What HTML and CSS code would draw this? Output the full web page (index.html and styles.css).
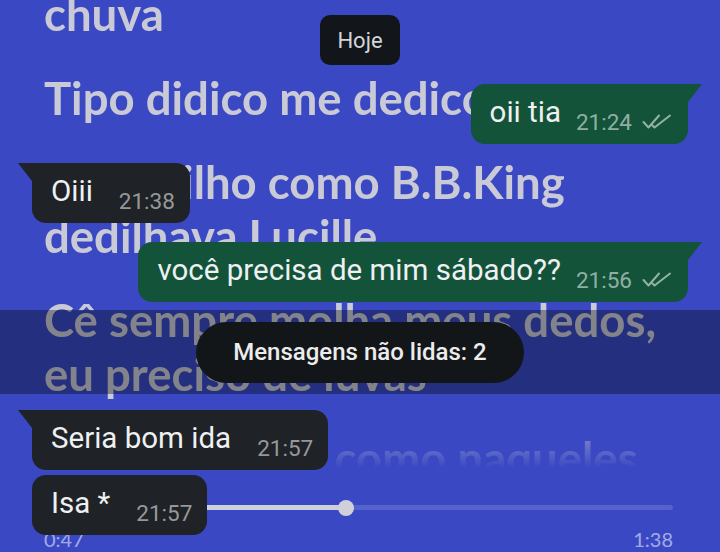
FILE: index.html
```html
<!DOCTYPE html>
<html lang="pt-BR">
<head>
    <meta charset="UTF-8">
    <meta name="viewport" content="width=device-width, initial-scale=1.0">
    <title>Conversa</title>
    <link rel="stylesheet" href="styles.css">
</head>
<body>

    <!-- Lyrics wallpaper -->
    <div class="lyrics-screen">
        <div class="lyrics">
            <p class="lyric">chuva</p>
            <p class="lyric">Tipo didico me dedico</p>
            <p class="lyric">Eu dedilho como B.B.King<br>dedilhava Lucille</p>
            <p class="lyric">Cê sempre molha meus dedos,<br>eu preciso de luvas</p>
            <p class="lyric">Te aquecendo como naqueles</p>
        </div>
        <div class="progress">
            <div class="progress-fill" style="width: 48%"></div>
        </div>
        <div class="times">
            <span>0:47</span>
            <span>1:38</span>
        </div>
    </div>

    <!-- Chat -->
    <div class="chat">
        <div class="date-pill">Hoje</div>

        <div class="msg out tail">
            <span class="msg-text">oii tia</span>
            <span class="msg-meta">
                <span class="msg-time">21:24</span>
                <svg class="ticks" viewBox="0 0 30 16"><path d="M1.5 8 L6.5 13.5 L17 1.5"/><path d="M10.5 11.5 L12.5 13.5 L28 1.5"/></svg>
            </span>
        </div>

        <div class="msg in tail">
            <span class="msg-text">Oiii</span>
            <span class="msg-meta"><span class="msg-time">21:38</span></span>
        </div>

        <div class="msg out tail">
            <span class="msg-text">você precisa de mim sábado??</span>
            <span class="msg-meta">
                <span class="msg-time">21:56</span>
                <svg class="ticks" viewBox="0 0 30 16"><path d="M1.5 8 L6.5 13.5 L17 1.5"/><path d="M10.5 11.5 L12.5 13.5 L28 1.5"/></svg>
            </span>
        </div>

        <div class="unread">
            <div class="unread-pill">Mensagens não lidas: 2</div>
        </div>

        <div class="msg in tail">
            <span class="msg-text">Seria bom ida</span>
            <span class="msg-meta"><span class="msg-time">21:57</span></span>
        </div>

        <div class="msg in cont">
            <span class="msg-text">Isa *</span>
            <span class="msg-meta"><span class="msg-time">21:57</span></span>
        </div>
    </div>

</body>
</html>
```

FILE: styles.css
```css
* {
    box-sizing: border-box;
}
body {
    margin: 0;
    width: 720px;
    height: 552px;
    overflow: hidden;
    position: relative;
    background: #3a49c3;
}

/* lyrics behind the chat */
.lyrics-screen {
    display: flex;
    flex-direction: column;
    height: 552px;
    padding: 0 47px 0 44px;
    font-family: Lato, "DejaVu Sans", sans-serif;
}
.lyrics {
    height: 481px;
    margin-top: -13px;
    overflow: hidden;
    display: flex;
    flex-direction: column;
    gap: 30px;
    -webkit-mask-image: linear-gradient(to bottom, #000 calc(100% - 70px), transparent);
    mask-image: linear-gradient(to bottom, #000 calc(100% - 70px), transparent);
}
.lyric {
    margin: 0;
    font-size: 45.5px;
    line-height: 54px;
    font-weight: 700;
    white-space: nowrap;
    color: #c9cad6;
}
.progress {
    margin-top: 37px;
    height: 5px;
    border-radius: 3px;
    background: rgba(255, 255, 255, 0.14);
}
.progress-fill {
    position: relative;
    height: 100%;
    border-radius: 3px;
    background: #cfd0d9;
}
.progress-fill::after {
    content: "";
    position: absolute;
    right: -8px;
    top: 50%;
    width: 16px;
    height: 16px;
    margin-top: -8px;
    border-radius: 50%;
    background: #cfd0d9;
}
.times {
    display: flex;
    justify-content: space-between;
    margin-top: 17px;
    font-size: 20px;
    line-height: 24px;
    color: rgba(255, 255, 255, 0.55);
}

/* chat on top */
.chat {
    position: absolute;
    inset: 0;
    display: flex;
    flex-direction: column;
    font-family: Roboto, "Liberation Sans", sans-serif;
}
.date-pill {
    align-self: center;
    margin-top: 15px;
    height: 50px;
    padding: 0 17px;
    display: flex;
    align-items: center;
    border-radius: 10px;
    background: #121519;
    color: #d3d5d7;
    font-size: 22px;
}
.msg {
    position: relative;
    display: flex;
    align-items: flex-end;
    margin-top: 19px;
    padding: 12px 16px 10px 19px;
    border-radius: 14px;
    color: #eef0f1;
}
.msg.out {
    align-self: flex-end;
    margin-right: 32px;
    background: #13533a;
}
.msg.in {
    align-self: flex-start;
    margin-left: 32px;
    padding-right: 15px;
    background: #1f2226;
}
.msg.cont {
    margin-top: 5px;
}
.msg.out.tail {
    border-top-right-radius: 0;
}
.msg.in.tail {
    border-top-left-radius: 0;
}
.msg.tail::before {
    content: "";
    position: absolute;
    top: 0;
    width: 14px;
    height: 18px;
    background: inherit;
}
.msg.out.tail::before {
    right: -14px;
    clip-path: polygon(0 0, 100% 0, 0 100%);
}
.msg.in.tail::before {
    left: -14px;
    clip-path: polygon(0 0, 100% 0, 100% 100%);
}
.msg-text {
    font-size: 29.5px;
    line-height: 32px;
    margin-bottom: 6px;
}
.msg-meta {
    display: flex;
    align-items: center;
    margin-left: 15px;
    margin-bottom: 1px;
    font-size: 22.5px;
    line-height: 22px;
    color: rgba(255, 255, 255, 0.55);
}
.msg.in .msg-meta {
    margin-left: 26px;
}
.ticks {
    width: 30px;
    height: 16px;
    margin-left: 10px;
    fill: none;
    stroke: rgba(255, 255, 255, 0.55);
    stroke-width: 2;
    stroke-linecap: round;
    stroke-linejoin: round;
}
.unread {
    display: flex;
    justify-content: center;
    align-items: center;
    height: 84px;
    margin-top: 8px;
    background: rgba(0, 0, 0, 0.35);
}
.unread + .msg {
    margin-top: 16px;
}
.unread-pill {
    height: 61px;
    padding: 0 37px;
    display: flex;
    align-items: center;
    border-radius: 31px;
    background: #131619;
    color: #ececec;
    font-size: 24px;
    font-weight: 500;
}
```
